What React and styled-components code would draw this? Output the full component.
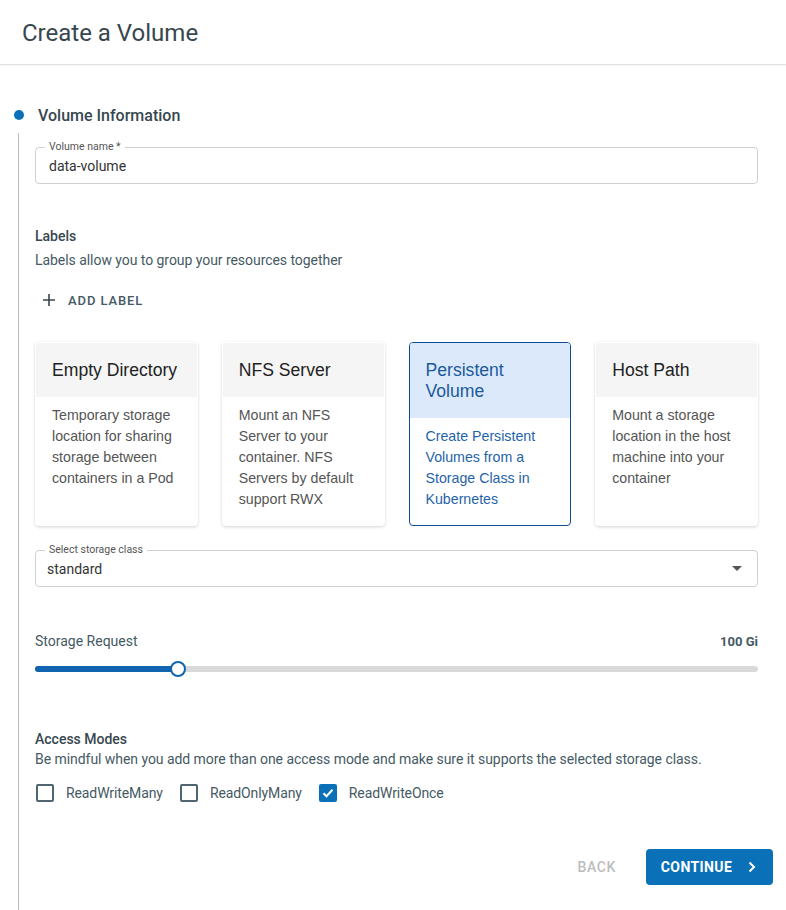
import styled, { createGlobalStyle } from "styled-components";

const BLUE = "#0a71b9";
const INK = "#37474f";

const GlobalStyle = createGlobalStyle`
  html, body {
    margin: 0;
    padding: 0;
    background: #fff;
    font-family: Roboto, "Noto Sans", sans-serif;
    color: ${INK};
  }
  * { box-sizing: border-box; }
`;

const VOLUME_TYPES = [
  {
    key: "empty",
    title: "Empty Directory",
    desc: "Temporary storage location for sharing storage between containers in a Pod",
  },
  {
    key: "nfs",
    title: "NFS Server",
    desc: "Mount an NFS Server to your container. NFS Servers by default support RWX",
  },
  {
    key: "pv",
    title: "Persistent Volume",
    desc: "Create Persistent Volumes from a Storage Class in Kubernetes",
    selected: true,
  },
  {
    key: "host",
    title: "Host Path",
    desc: "Mount a storage location in the host machine into your container",
  },
];

const ACCESS_MODES = [
  { key: "rwm", label: "ReadWriteMany" },
  { key: "rom", label: "ReadOnlyMany" },
  { key: "rwo", label: "ReadWriteOnce", checked: true },
];

export default function App() {
  const sliderPercent = 19.8;

  return (
    <>
      <GlobalStyle />
      <Header>
        <Title>Create a Volume</Title>
      </Header>

      <Main>
        <StepHead>
          <StepDot />
          <StepLabel>Volume Information</StepLabel>
        </StepHead>

        <StepBody>
          <Form>
            <Field>
              <FieldLabel>Volume name *</FieldLabel>
              <FieldValue>data-volume</FieldValue>
            </Field>

            <Section $top={43} $gap={6}>
              <SectionTitle>Labels</SectionTitle>
              <SectionDesc>Labels allow you to group your resources together</SectionDesc>
            </Section>

            <TextButton>
              <svg width="14" height="14" viewBox="0 0 14 14">
                <path d="M7 1v12M1 7h12" stroke={INK} strokeWidth="1.6" />
              </svg>
              ADD LABEL
            </TextButton>

            <CardGrid>
              {VOLUME_TYPES.map((type) => (
                <Card key={type.key} $selected={type.selected}>
                  <CardHead $selected={type.selected}>{type.title}</CardHead>
                  <CardBody $selected={type.selected}>{type.desc}</CardBody>
                </Card>
              ))}
            </CardGrid>

            <SelectField>
              <FieldLabel>Select storage class</FieldLabel>
              <SelectValue>standard</SelectValue>
              <svg width="10" height="5" viewBox="0 0 10 5">
                <path d="M0 0h10L5 5z" fill="#555" />
              </svg>
            </SelectField>

            <SliderHead>
              <SliderLabel>Storage Request</SliderLabel>
              <SliderValue>100 Gi</SliderValue>
            </SliderHead>
            <SliderTrack>
              <SliderFill style={{ width: `${sliderPercent}%` }} />
              <SliderThumb style={{ left: `${sliderPercent}%` }} />
            </SliderTrack>

            <Section $top={58} $gap={2}>
              <SectionTitle>Access Modes</SectionTitle>
              <SectionDesc>
                Be mindful when you add more than one access mode and make sure it supports the
                selected storage class.
              </SectionDesc>
            </Section>

            <CheckRow>
              {ACCESS_MODES.map((mode) => (
                <CheckItem key={mode.key}>
                  <CheckBox $checked={mode.checked}>
                    {mode.checked && (
                      <svg width="14" height="14" viewBox="0 0 14 14">
                        <path
                          d="M2.5 7.2l3 3 6-6.4"
                          fill="none"
                          stroke="#fff"
                          strokeWidth="2"
                        />
                      </svg>
                    )}
                  </CheckBox>
                  {mode.label}
                </CheckItem>
              ))}
            </CheckRow>
          </Form>

          <Actions>
            <BackButton>BACK</BackButton>
            <ContinueButton>
              CONTINUE
              <svg width="8" height="12" viewBox="0 0 8 12">
                <path d="M1.5 1.5L6 6l-4.5 4.5" fill="none" stroke="#fff" strokeWidth="2" />
              </svg>
            </ContinueButton>
          </Actions>
        </StepBody>
      </Main>
    </>
  );
}

const Header = styled.header`
  height: 65px;
  padding-left: 22px;
  display: flex;
  align-items: center;
  border-bottom: 1px solid #e2e2e2;
  box-shadow: 0 1px 2px rgba(0, 0, 0, 0.05);
`;

const Title = styled.h1`
  margin: 0;
  font-size: 24px;
  font-weight: 400;
  color: ${INK};
  padding-top: 2px;
`;

const Main = styled.main`
  padding-top: 38px;
`;

const StepHead = styled.div`
  display: flex;
  align-items: center;
  gap: 14px;
  padding-left: 14px;
  height: 24px;
`;

const StepDot = styled.span`
  width: 10px;
  height: 10px;
  border-radius: 50%;
  background: ${BLUE};
`;

const StepLabel = styled.span`
  font-size: 16px;
  font-weight: 500;
  color: ${INK};
`;

const StepBody = styled.div`
  margin-left: 18px;
  margin-top: 6px;
  border-left: 1px solid #bdbdbd;
  padding: 3px 13px 24px 16px;
  min-height: 780px;
`;

const Form = styled.div`
  margin-right: 15px;
  padding-top: 11px;
`;

const Field = styled.div`
  position: relative;
  height: 37px;
  border: 1px solid #d0d0d0;
  border-radius: 4px;
  display: flex;
  align-items: center;
  padding: 0 13px;
`;

const FieldLabel = styled.span`
  position: absolute;
  top: -8px;
  left: 9px;
  padding: 0 4px;
  background: #fff;
  font-size: 10.5px;
  line-height: 14px;
  color: #555;
`;

const FieldValue = styled.span`
  font-size: 14px;
  color: #333;
`;

const Section = styled.div`
  margin-top: ${(p) => p.$top}px;
  display: flex;
  flex-direction: column;
  gap: ${(p) => p.$gap}px;
`;

const SectionTitle = styled.div`
  font-size: 14px;
  font-weight: 500;
  line-height: 18px;
  color: ${INK};
`;

const SectionDesc = styled.div`
  font-size: 14px;
  line-height: 18px;
  color: #455a64;
  letter-spacing: -0.05px;
`;

const TextButton = styled.button`
  margin-top: 21px;
  display: flex;
  align-items: center;
  gap: 12px;
  padding: 0 0 0 7px;
  border: none;
  background: none;
  font-family: Roboto, sans-serif;
  font-size: 13px;
  font-weight: 500;
  letter-spacing: 0.9px;
  color: #455a64;
  height: 20px;
`;

const CardGrid = styled.div`
  margin-top: 32px;
  display: grid;
  grid-template-columns: repeat(4, 1fr);
  gap: 24px;
`;

const Card = styled.div`
  height: 184px;
  border-radius: 4px;
  overflow: hidden;
  background: #fff;
  border: 1px solid ${(p) => (p.$selected ? "#0b4f92" : "transparent")};
  box-shadow: ${(p) => (p.$selected ? "none" : "0 1px 3px rgba(0, 0, 0, 0.18)")};
  font-family: "Liberation Sans", Arial, sans-serif;
`;

const CardHead = styled.div`
  padding: 17px 16px 16px;
  font-size: 17.6px;
  line-height: 21px;
  background: ${(p) => (p.$selected ? "#dce9fb" : "#f5f5f5")};
  color: ${(p) => (p.$selected ? "#1a5a9c" : "#222")};
`;

const CardBody = styled.div`
  padding: 8px 16px;
  font-size: 14.2px;
  line-height: 21px;
  color: ${(p) => (p.$selected ? "#1f63a8" : "#555")};
`;

const SelectField = styled(Field)`
  margin-top: 24px;
  padding: 0 15px 0 11px;
  justify-content: space-between;
`;

const SelectValue = styled.span`
  font-size: 14px;
  color: #333;
`;

const SliderHead = styled.div`
  margin-top: 45px;
  display: flex;
  justify-content: space-between;
  align-items: center;
  height: 18px;
`;

const SliderLabel = styled.span`
  font-size: 14px;
  color: #455a64;
`;

const SliderValue = styled.span`
  font-size: 13px;
  font-weight: 700;
  color: #455a64;
`;

const SliderTrack = styled.div`
  position: relative;
  margin-top: 16px;
  height: 6px;
  border-radius: 3px;
  background: #d9d9d9;
`;

const SliderFill = styled.div`
  height: 100%;
  border-radius: 3px;
  background: #1064b0;
`;

const SliderThumb = styled.span`
  position: absolute;
  top: 50%;
  width: 16px;
  height: 16px;
  margin: -8px 0 0 -8px;
  border-radius: 50%;
  background: #fff;
  border: 2px solid #1064b0;
`;

const CheckRow = styled.div`
  margin-top: 15px;
  display: flex;
  gap: 16px;
`;

const CheckItem = styled.label`
  display: flex;
  align-items: center;
  gap: 12px;
  font-size: 14px;
  color: #455a64;
  height: 20px;
  letter-spacing: -0.1px;
`;

const CheckBox = styled.span`
  width: 18px;
  height: 18px;
  margin-left: 1px;
  border-radius: 2px;
  display: flex;
  align-items: center;
  justify-content: center;
  border: ${(p) => (p.$checked ? "none" : "2px solid #4f6570")};
  background: ${(p) => (p.$checked ? BLUE : "transparent")};
`;

const Actions = styled.div`
  margin-top: 46px;
  display: flex;
  justify-content: flex-end;
  align-items: center;
  gap: 30px;
`;

const BackButton = styled.button`
  border: none;
  background: none;
  padding: 0;
  font-family: Roboto, sans-serif;
  font-size: 14px;
  font-weight: 500;
  letter-spacing: 0.6px;
  color: #bdbdbd;
`;

const ContinueButton = styled.button`
  height: 36px;
  width: 127px;
  border: none;
  border-radius: 4px;
  background: ${BLUE};
  color: #fff;
  display: flex;
  align-items: center;
  justify-content: center;
  gap: 16px;
  padding-left: 4px;
  font-family: Roboto, sans-serif;
  font-size: 14px;
  font-weight: 700;
  letter-spacing: 0.4px;
`;
